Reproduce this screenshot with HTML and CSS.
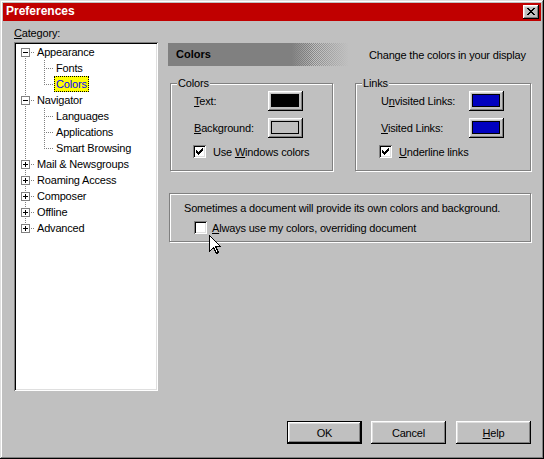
FILE: index.html
```html
<!DOCTYPE html>
<html>
<head>
<meta charset="utf-8">
<title>Preferences</title>
<link rel="stylesheet" href="styles.css">
</head>
<body>
<div class="window">
  <div class="titlebar">
    <span class="title">Preferences</span>
    <span class="close">
      <svg width="8" height="7" viewBox="0 0 8 7" shape-rendering="crispEdges">
        <path d="M0 0h2v1h-2z M6 0h2v1h-2z M1 1h2v1h-2z M5 1h2v1h-2z M2 2h4v1h-4z M3 3h2v1h-2z M2 4h4v1h-4z M1 5h2v1h-2z M5 5h2v1h-2z M0 6h2v1h-2z M6 6h2v1h-2z" fill="#000"/>
      </svg>
    </span>
  </div>
  <div class="content">
    <div class="main">
      <div class="left">
        <div class="cat-label"><u>C</u>ategory:</div>
        <div class="tree">
          <svg class="tree-lines" width="140" height="200" viewBox="0 0 140 200" shape-rendering="crispEdges">
            <g stroke="#808080" stroke-width="1" stroke-dasharray="1 1" fill="none">
              <line x1="9.5" y1="8" x2="9.5" y2="185"/>
              <line x1="28.5" y1="16" x2="28.5" y2="41"/>
              <line x1="28.5" y1="64" x2="28.5" y2="105"/>
              <line x1="15" y1="8.5" x2="19" y2="8.5"/>
              <line x1="15" y1="56.5" x2="19" y2="56.5"/>
              <line x1="15" y1="120.5" x2="19" y2="120.5"/>
              <line x1="15" y1="136.5" x2="19" y2="136.5"/>
              <line x1="15" y1="152.5" x2="19" y2="152.5"/>
              <line x1="15" y1="168.5" x2="19" y2="168.5"/>
              <line x1="15" y1="184.5" x2="19" y2="184.5"/>
              <line x1="30" y1="24.5" x2="38" y2="24.5"/>
              <line x1="30" y1="40.5" x2="38" y2="40.5"/>
              <line x1="30" y1="72.5" x2="38" y2="72.5"/>
              <line x1="30" y1="88.5" x2="38" y2="88.5"/>
              <line x1="30" y1="104.5" x2="38" y2="104.5"/>
            </g>
            <g fill="#fff" stroke="#808080">
              <rect x="5.5" y="4.5" width="8" height="8"/>
              <rect x="5.5" y="52.5" width="8" height="8"/>
              <rect x="5.5" y="116.5" width="8" height="8"/>
              <rect x="5.5" y="132.5" width="8" height="8"/>
              <rect x="5.5" y="148.5" width="8" height="8"/>
              <rect x="5.5" y="164.5" width="8" height="8"/>
              <rect x="5.5" y="180.5" width="8" height="8"/>
            </g>
            <g fill="#000">
              <rect x="7" y="8" width="5" height="1"/>
              <rect x="7" y="56" width="5" height="1"/>
              <rect x="7" y="120" width="5" height="1"/><rect x="9" y="118" width="1" height="5"/>
              <rect x="7" y="136" width="5" height="1"/><rect x="9" y="134" width="1" height="5"/>
              <rect x="7" y="152" width="5" height="1"/><rect x="9" y="150" width="1" height="5"/>
              <rect x="7" y="168" width="5" height="1"/><rect x="9" y="166" width="1" height="5"/>
              <rect x="7" y="184" width="5" height="1"/><rect x="9" y="182" width="1" height="5"/>
            </g>
          </svg>
          <div class="row">Appearance</div>
          <div class="row child">Fonts</div>
          <div class="row child"><span class="sel">Colors</span></div>
          <div class="row">Navigator</div>
          <div class="row child">Languages</div>
          <div class="row child">Applications</div>
          <div class="row child">Smart Browsing</div>
          <div class="row">Mail &amp; Newsgroups</div>
          <div class="row">Roaming Access</div>
          <div class="row">Composer</div>
          <div class="row">Offline</div>
          <div class="row">Advanced</div>
        </div>
      </div>
      <div class="right">
        <div class="head-row">
          <div class="panel-head">Colors</div>
          <div class="panel-desc">Change the colors in your display</div>
        </div>
        <div class="groups">
          <div class="group g-colors">
            <div class="group-title">Colors</div>
            <div class="group-body">
              <div class="field"><span class="flabel"><u>T</u>ext:</span><span class="swatch"><span class="chip chip-black"></span></span></div>
              <div class="field"><span class="flabel"><u>B</u>ackground:</span><span class="swatch"><span class="chip chip-gray"></span></span></div>
              <div class="check-row">
                <span class="checkbox">
                  <svg width="7" height="7" viewBox="0 0 7 7" shape-rendering="crispEdges"><path d="M6 0h1v1h-1z M5 1h2v1h-2z M0 2h1v1h-1z M4 2h3v1h-3z M0 3h2v1h-2z M3 3h3v1h-3z M0 4h5v1h-5z M1 5h3v1h-3z M2 6h1v1h-1z" fill="#000"/></svg>
                </span>
                <span>Use <u>W</u>indows colors</span>
              </div>
            </div>
          </div>
          <div class="group g-links">
            <div class="group-title">Links</div>
            <div class="group-body">
              <div class="field"><span class="flabel">U<u>n</u>visited Links:</span><span class="swatch"><span class="chip chip-blue"></span></span></div>
              <div class="field"><span class="flabel"><u>V</u>isited Links:</span><span class="swatch"><span class="chip chip-blue"></span></span></div>
              <div class="check-row">
                <span class="checkbox">
                  <svg width="7" height="7" viewBox="0 0 7 7" shape-rendering="crispEdges"><path d="M6 0h1v1h-1z M5 1h2v1h-2z M0 2h1v1h-1z M4 2h3v1h-3z M0 3h2v1h-2z M3 3h3v1h-3z M0 4h5v1h-5z M1 5h3v1h-3z M2 6h1v1h-1z" fill="#000"/></svg>
                </span>
                <span><u>U</u>nderline links</span>
              </div>
            </div>
          </div>
        </div>
        <div class="group g-doc">
          <div class="doc-text">Sometimes a document will provide its own colors and background.</div>
          <div class="check-row">
            <span class="checkbox"></span>
            <span><u>A</u>lways use my colors, overriding document</span>
          </div>
        </div>
      </div>
    </div>
    <div class="buttons">
      <div class="btn btn-default">OK</div>
      <div class="btn btn-cancel">Cancel</div>
      <div class="btn btn-help"><u>H</u>elp</div>
    </div>
  </div>
  <svg class="cursor" width="13" height="20" viewBox="0 0 13 20" shape-rendering="crispEdges">
    <path d="M0.5 0.5 L0.5 16.5 L4.5 12.5 L7.5 18.5 L9.5 17.5 L6.5 11.5 L11.5 11.5 Z" fill="#fff" stroke="#000" stroke-width="1" stroke-linejoin="miter"/>
  </svg>
</div>
</body>
</html>
```

FILE: styles.css
```css
* {
  box-sizing: border-box;
}

body {
  margin: 0;
  background: #c0c0c0;
  font-family: "Liberation Sans", Arial, sans-serif;
  font-size: 11px;
  letter-spacing: -0.18px;
  color: #000;
}

u {
  text-decoration: underline;
  text-underline-offset: 1px;
}

.window {
  position: relative;
  width: 544px;
  height: 459px;
  padding: 3px;
  background: #c0c0c0;
  box-shadow: inset -1px -1px #000, inset 1px 1px #dfdfdf, inset -2px -2px #808080, inset 2px 2px #fff;
}

.titlebar {
  display: flex;
  align-items: flex-start;
  height: 18px;
  padding-left: 3px;
  background: #c00000;
  color: #fff;
}

.title {
  flex: 1;
  margin-top: 1px;
  font-size: 12px;
  font-weight: bold;
  line-height: 14px;
  letter-spacing: 0;
}

.close {
  display: flex;
  width: 16px;
  height: 14px;
  margin: 2px 2px 0 0;
  background: #c0c0c0;
  box-shadow: inset -1px -1px #000, inset 1px 1px #fff, inset -2px -2px #808080, inset 2px 2px #dfdfdf;
}

.close svg {
  display: block;
  margin: 3px 0 0 4px;
}

.content {
  padding: 5px 0 0 11px;
}

.main {
  display: flex;
  height: 365px;
}

.left {
  width: 144px;
  flex: none;
}

.cat-label {
  height: 14px;
  line-height: 14px;
}

.tree {
  position: relative;
  height: 349px;
  margin-top: 2px;
  padding: 2px;
  background: #fff;
  box-shadow: inset 1px 1px #808080, inset -1px -1px #fff, inset 2px 2px #000, inset -2px -2px #dfdfdf;
}

.tree-lines {
  position: absolute;
  left: 2px;
  top: 2px;
}

.row {
  position: relative;
  height: 16px;
  line-height: 16px;
  padding-left: 21px;
  white-space: nowrap;
}

.row.child {
  padding-left: 40px;
}

.sel {
  margin-left: -2px;
  padding: 1px 1px;
  background: #ffff00;
  border: 1px dotted #000;
  color: #0000ff;
}

.right {
  margin-left: 10px;
  padding-top: 17px;
}

.head-row {
  display: flex;
  align-items: center;
  height: 23px;
}

.panel-head {
  width: 180px;
  height: 23px;
  line-height: 23px;
  padding-left: 8px;
  font-weight: bold;
  letter-spacing: 0;
  background:
    linear-gradient(90deg, #808080 0 124px, rgba(128, 128, 128, 0) 146px),
    linear-gradient(90deg, rgba(192, 192, 192, 0) 0 140px, #c0c0c0 181px),
    repeating-conic-gradient(#808080 0 25%, #c0c0c0 0 50%) 0 0 / 2px 2px;
}

.panel-desc {
  margin-left: 21px;
  white-space: nowrap;
}

.groups {
  display: flex;
  gap: 22px;
  margin: 17px 0 0 2px;
}

.group {
  border: 1px solid #808080;
  box-shadow: inset 1px 1px #fff, 1px 1px #fff;
}

.g-colors {
  width: 163px;
  height: 88px;
}

.g-links {
  width: 176px;
  height: 88px;
}

.group-title {
  width: fit-content;
  margin: -7px 0 0 6px;
  padding: 0 1px;
  line-height: 13px;
  background: #c0c0c0;
}

.group-body {
  padding-top: 1px;
}

.g-colors .group-body {
  padding-left: 23px;
}

.g-links .group-body {
  padding-left: 25px;
}

.field {
  display: flex;
  align-items: center;
  height: 20px;
  margin-bottom: 7px;
}

.g-colors .flabel {
  width: 74px;
}

.g-links .flabel {
  width: 88px;
}

.swatch {
  display: flex;
  width: 35px;
  height: 20px;
  padding: 3px 4px 4px 3px;
  background: #c0c0c0;
  box-shadow: inset -1px -1px #000, inset 1px 1px #fff, inset -2px -2px #808080, inset 2px 2px #dfdfdf;
}

.chip {
  flex: 1;
  border: 1px solid #000;
}

.chip-black {
  background: #000;
}

.chip-gray {
  background: #c0c0c0;
}

.chip-blue {
  background: #0000bf;
}

.check-row {
  display: flex;
  align-items: center;
  height: 13px;
  margin-top: 3px;
  white-space: nowrap;
}

.checkbox {
  display: flex;
  flex: none;
  width: 13px;
  height: 13px;
  padding: 3px;
  background: #fff;
  box-shadow: inset 1px 1px #808080, inset -1px -1px #fff, inset 2px 2px #000, inset -2px -2px #dfdfdf;
}

.checkbox svg {
  display: block;
}

.g-colors .checkbox {
  margin: 0 7px 0 -1px;
}

.g-links .checkbox {
  margin: 0 7px 0 -2px;
}

.g-doc {
  width: 362px;
  height: 49px;
  margin: 22px 0 0 1px;
  padding: 8px 0 0 14px;
}

.doc-text {
  line-height: 13px;
  white-space: nowrap;
}

.g-doc .check-row {
  margin-top: 6px;
}

.g-doc .checkbox {
  margin: 0 5px 0 10px;
}

.buttons {
  display: flex;
  justify-content: flex-end;
  margin-top: 30px;
  padding-right: 10px;
}

.btn {
  display: flex;
  align-items: center;
  justify-content: center;
  width: 75px;
  height: 23px;
  background: #c0c0c0;
  box-shadow: inset -1px -1px #000, inset 1px 1px #fff, inset -2px -2px #808080, inset 2px 2px #dfdfdf;
}

.btn-default {
  border: 1px solid #000;
}

.btn-cancel {
  margin-left: 9px;
}

.btn-help {
  margin-left: 10px;
}

.cursor {
  position: absolute;
  left: 209px;
  top: 235px;
}
```
